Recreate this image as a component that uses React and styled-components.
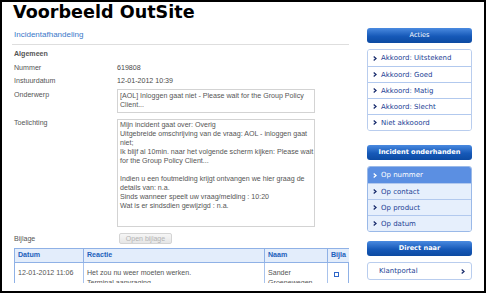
import React from "react";
import styled, { createGlobalStyle } from "styled-components";

const Global = createGlobalStyle`
  html, body { margin: 0; padding: 0; background: #fff; }
  * { box-sizing: border-box; }
`;

const Frame = styled.div`
  width: 486px;
  height: 293px;
  border: 2px solid #000;
  padding: 0 12px 0 10px;
  display: flex;
  flex-direction: column;
  overflow: hidden;
  background: #fff;
`;

const Title = styled.h1`
  margin: 0;
  height: 26px;
  padding-left: 1px;
  font: bold 17.6px/20px "DejaVu Sans", Verdana, sans-serif;
  color: #000;
`;

const Body = styled.div`
  display: flex;
  gap: 18px;
  height: 255px;
`;

const Main = styled.div`
  width: 337px;
  height: 255px;
  overflow: hidden;
  font-family: "Liberation Sans", Arial, sans-serif;
  font-size: 7.1px;
  color: #555;
`;

const Crumb = styled.div`
  height: 17px;
  line-height: 14px;
  padding-left: 2px;
  font-size: 8px;
  color: #3a78c9;
  border-bottom: 1px solid #dedede;
`;

const SectionTitle = styled.div`
  margin-top: 3px;
  padding-left: 2px;
  height: 13.5px;
  line-height: 13.5px;
  font-weight: bold;
  color: #555;
`;

const Field = styled.div`
  display: grid;
  grid-template-columns: 105px 198px;
  align-items: ${(p) => (p.$top ? "start" : "center")};
  margin-top: ${(p) => p.$mt || 0}px;
  line-height: ${(p) => (p.$top ? "9px" : "13.3px")};
`;

const Label = styled.div`
  padding-left: 2px;
  padding-top: ${(p) => p.$pt || 0}px;
  color: #555;
`;

const Value = styled.div`
  color: #4a4a4a;
`;

const TextBox = styled.div`
  height: ${(p) => p.$h}px;
  border: 1px solid #d3d3d3;
  padding: ${(p) => p.$pt || 1}px 1px 0 2px;
  line-height: ${(p) => p.$lh || 9}px;
  color: #555;
  white-space: nowrap;
  overflow: hidden;
`;

const Blank = styled.div`
  height: ${(p) => p.$h}px;
`;

const GhostButton = styled.button`
  margin-left: 2px;
  width: 53px;
  height: 11px;
  padding: 0;
  border: 1px solid #d4d4d4;
  border-radius: 2px;
  background: linear-gradient(#f6f6f6, #e6e6e6);
  color: #b4b4b4;
  font: 7px "Liberation Sans", Arial, sans-serif;
  line-height: 9px;
`;

const Table = styled.div`
  margin: 2.5px 0 0 2px;
  width: 335px;
  display: grid;
  grid-template-columns: 68px 181px 63px 23px;
  border-left: 1px solid #8fb1e6;
  border-right: 1px solid #8fb1e6;
`;

const HeadCell = styled.div`
  height: 15px;
  line-height: 13px;
  padding-left: 3px;
  background: #e3edfb;
  border-top: 1px solid #8fb1e6;
  border-bottom: 1px solid #8fb1e6;
  border-left: ${(p) => (p.$first ? "none" : "1px solid #8fb1e6")};
  font-weight: bold;
  color: #2260bb;
  white-space: nowrap;
  overflow: hidden;
`;

const Cell = styled.div`
  padding: 6px 0 0 3px;
  line-height: 9.5px;
  height: 30px;
  border-left: ${(p) => (p.$first ? "none" : "1px solid #a9c3ec")};
  color: #555;
  white-space: nowrap;
  overflow: hidden;
`;

const Check = styled.span`
  display: block;
  margin: 3px 0 0 3px;
  width: 5px;
  height: 5px;
  border: 1px solid #2f66c8;
`;

const Side = styled.div`
  width: 105px;
  display: flex;
  flex-direction: column;
  font-family: "DejaVu Sans", Verdana, sans-serif;
`;

const SideHead = styled.div`
  height: 15px;
  margin-top: ${(p) => p.$mt || 0}px;
  border-radius: 3px;
  background: linear-gradient(#4a8ae0, #1659b8 55%, #0c4aa2);
  color: #fff;
  font-size: 6.6px;
  font-weight: ${(p) => (p.$bold ? "bold" : "normal")};
  text-align: center;
  line-height: 15px;
  white-space: nowrap;
`;

const SideList = styled.div`
  margin-top: 6px;
  border: 1px solid ${(p) => (p.$filled ? "#9ab9e8" : "#b9cdee")};
  border-radius: 3px;
  overflow: hidden;
  display: flex;
  flex-direction: column;
`;

const SideItem = styled.div`
  height: ${(p) => p.$h || 16}px;
  display: flex;
  align-items: center;
  gap: 4px;
  padding-left: 5px;
  font-size: 7px;
  white-space: nowrap;
  color: ${(p) => (p.$active ? "#fff" : "#1d3f95")};
  background: ${(p) => (p.$active ? "#5b8fe2" : p.$filled ? "#e6effc" : "#fff")};
  & + & {
    border-top: 1px solid ${(p) => (p.$filled ? "#b2c9ee" : "#c9d8f1")};
  }
`;

const LinkBox = styled.div`
  margin-top: 6px;
  height: 18px;
  border: 1px solid #b9cdee;
  border-radius: 3px;
  display: flex;
  align-items: center;
  justify-content: space-between;
  padding: 0 6px 0 11px;
  font-size: 7px;
  color: #1d3f95;
`;

const Chevron = ({ color = "#1b2e6e" }) => (
  <svg width="4" height="5" viewBox="0 0 4 5" style={{ flex: "none" }}>
    <path d="M0.7 0.5 L3 2.5 L0.7 4.5" fill="none" stroke={color} strokeWidth="1.3" />
  </svg>
);

const acties = [
  "Akkoord: Uitstekend",
  "Akkoord: Goed",
  "Akkoord: Matig",
  "Akkoord: Slecht",
  "Niet akkooord",
];
const onderhanden = ["Op nummer", "Op contact", "Op product", "Op datum"];

export default function App() {
  return (
    <>
      <Global />
      <Frame>
        <Title>Voorbeeld OutSite</Title>
        <Body>
          <Main>
            <Crumb>Incidentafhandeling</Crumb>
            <SectionTitle>Algemeen</SectionTitle>
            <Field>
              <Label>Nummer</Label>
              <Value>619808</Value>
            </Field>
            <Field>
              <Label>Instuurdatum</Label>
              <Value>12-01-2012 10:39</Value>
            </Field>
            <Field $top $mt={1}>
              <Label $pt={2}>Onderwerp</Label>
              <TextBox $h={24} $pt={1.5} $lh={9.3}>
                [AOL] Inloggen gaat niet - Please wait for the Group Policy
                <br />
                Client...
              </TextBox>
            </Field>
            <Field $top $mt={6}>
              <Label $pt={0}>Toelichting</Label>
              <TextBox $h={108} $pt={0}>
                Mijn incident gaat over: Overig
                <br />
                Uitgebreide omschrijving van de vraag: AOL - inloggen gaat
                <br />
                niet;
                <br />
                Ik blijf al 10min. naar het volgende scherm kijken: Please wait
                <br />
                for the Group Policy Client...
                <br />
                <Blank $h={9} />
                Indien u een foutmelding krijgt ontvangen we hier graag de
                <br />
                details van: n.a.
                <br />
                Sinds wanneer speelt uw vraag/melding : 10:20
                <br />
                Wat is er sindsdien gewijzigd : n.a.
              </TextBox>
            </Field>
            <Field $mt={5.5}>
              <Label>Bijlage</Label>
              <div>
                <GhostButton disabled>Open bijlage</GhostButton>
              </div>
            </Field>
            <Table>
              <HeadCell $first>Datum</HeadCell>
              <HeadCell>Reactie</HeadCell>
              <HeadCell>Naam</HeadCell>
              <HeadCell>Bijla</HeadCell>
              <Cell $first>12-01-2012 11:06</Cell>
              <Cell>
                Het zou nu weer moeten werken.
                <br />
                Terminal aanvraging
              </Cell>
              <Cell>
                Sander
                <br />
                Groenewegen
              </Cell>
              <Cell>
                <Check />
              </Cell>
            </Table>
          </Main>
          <Side>
            <SideHead>Acties</SideHead>
            <SideList>
              {acties.map((a) => (
                <SideItem key={a}>
                  <Chevron />
                  {a}
                </SideItem>
              ))}
            </SideList>
            <SideHead $mt={14} $bold>
              Incident onderhanden
            </SideHead>
            <SideList $filled>
              {onderhanden.map((a, i) => (
                <SideItem key={a} $filled $active={i === 0}>
                  <Chevron color={i === 0 ? "#fff" : "#1b2e6e"} />
                  {a}
                </SideItem>
              ))}
            </SideList>
            <SideHead $mt={9} $bold>
              Direct naar
            </SideHead>
            <LinkBox>
              Klantportal
              <Chevron />
            </LinkBox>
          </Side>
        </Body>
      </Frame>
    </>
  );
}
